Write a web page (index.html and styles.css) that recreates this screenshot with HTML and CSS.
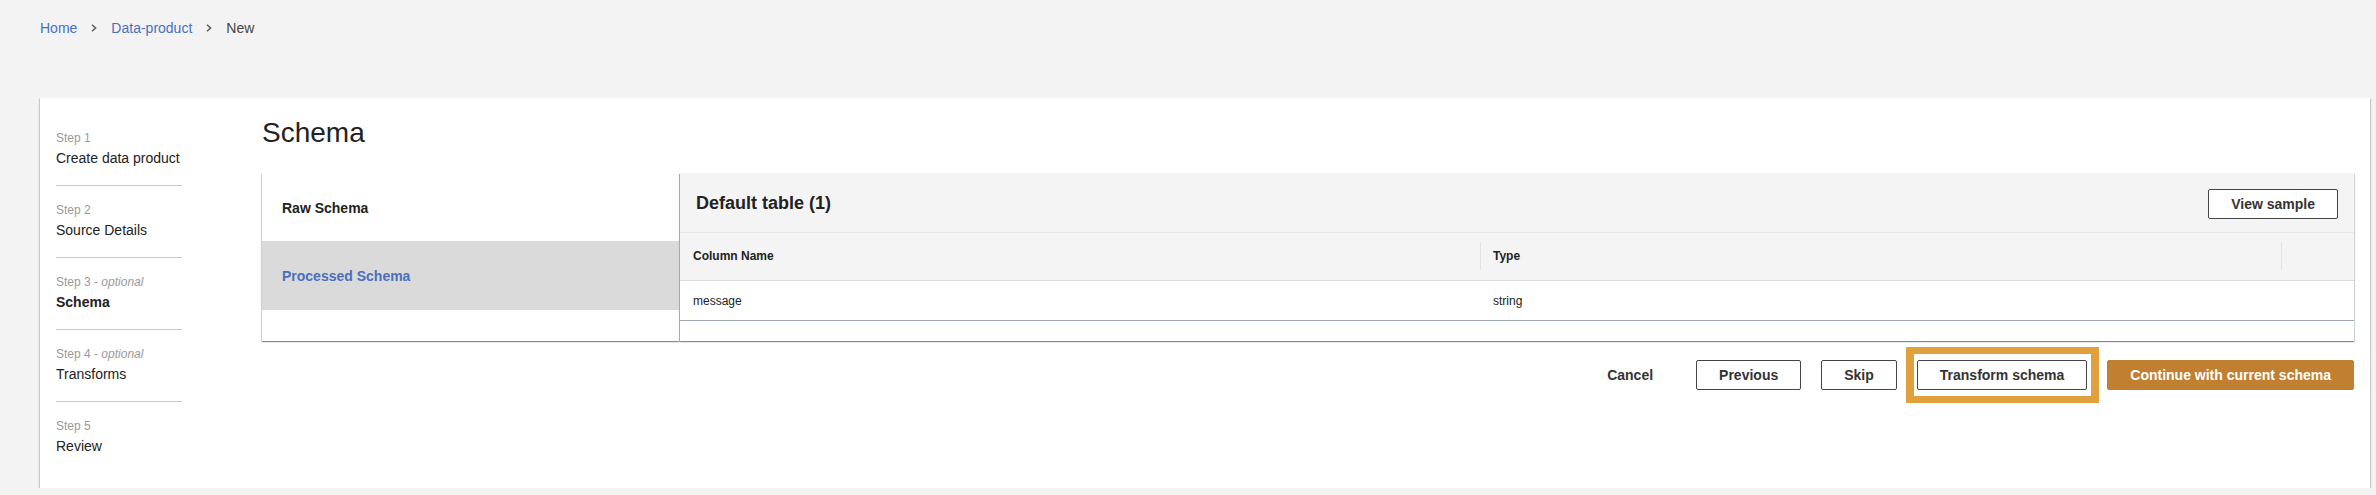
FILE: index.html
```html
<!DOCTYPE html>
<html lang="en">
<head>
  <meta charset="UTF-8" />
  <title>New data product - Schema</title>
  <link rel="stylesheet" href="styles.css">
</head>
<body>
<nav class="breadcrumbs">
  <a href="#">Home</a>
  <svg class="crumb-sep" width="6" height="8" viewBox="0 0 6 8"><path d="M1 0.8 L4.6 4 L1 7.2" /></svg>
  <a href="#">Data-product</a>
  <svg class="crumb-sep" width="6" height="8" viewBox="0 0 6 8"><path d="M1 0.8 L4.6 4 L1 7.2" /></svg>
  <span class="crumb-current">New</span>
</nav>

<div class="page">
  <div class="wizard">
    <ol class="steps">
      <li class="step">
        <span class="step-label">Step 1</span>
        <span class="step-title">Create data product</span>
      </li>
      <li class="step">
        <span class="step-label">Step 2</span>
        <span class="step-title">Source Details</span>
      </li>
      <li class="step active">
        <span class="step-label">Step 3 - <em>optional</em></span>
        <span class="step-title">Schema</span>
      </li>
      <li class="step">
        <span class="step-label">Step 4 - <em>optional</em></span>
        <span class="step-title">Transforms</span>
      </li>
      <li class="step">
        <span class="step-label">Step 5</span>
        <span class="step-title">Review</span>
      </li>
    </ol>

    <div class="content">
      <h1>Schema</h1>

      <div class="schema-panels">
        <ul class="schema-tabs">
          <li class="schema-tab">Raw Schema</li>
          <li class="schema-tab selected">Processed Schema</li>
        </ul>

        <div class="table-panel">
          <div class="table-header">
            <h2>Default table (1)</h2>
            <button class="btn">View sample</button>
          </div>
          <table class="schema-table">
            <colgroup>
              <col class="col-name">
              <col class="col-type">
              <col>
            </colgroup>
            <thead>
              <tr>
                <th>Column Name</th>
                <th class="sep">Type</th>
                <th class="sep"></th>
              </tr>
            </thead>
            <tbody>
              <tr>
                <td>message</td>
                <td>string</td>
                <td></td>
              </tr>
            </tbody>
          </table>
        </div>
      </div>

      <div class="actions">
        <button class="btn btn-link">Cancel</button>
        <button class="btn">Previous</button>
        <button class="btn">Skip</button>
        <button class="btn highlighted">Transform schema</button>
        <button class="btn btn-primary">Continue with current schema</button>
      </div>
    </div>
  </div>
</div>
</body>
</html>
```

FILE: styles.css
```css
/* Reset and base */
* {
  box-sizing: border-box;
}
body {
  margin: 0;
  font-family: 'Liberation Sans', Arial, sans-serif;
  background: #f3f3f3;
  color: #222;
}
button {
  font-family: inherit;
}

/* Breadcrumbs */
.breadcrumbs {
  display: flex;
  align-items: flex-start;
  gap: 14px;
  padding: 18px 0 0 40px;
  height: 98px;
  font-size: 14px;
  line-height: 20px;
}
.breadcrumbs a {
  color: #4a70bd;
  text-decoration: none;
}
.crumb-sep {
  margin-top: 6px;
  fill: none;
  stroke: #545b64;
  stroke-width: 1.5;
}
.crumb-current {
  color: #444;
}

/* Wizard card */
.page {
  padding: 0 6px 0 40px;
}
.wizard {
  display: flex;
  gap: 80px;
  min-height: 388px;
  padding: 18px 16px 15px 16px;
  background: #fff;
  box-shadow: 0 1px 1px 0 rgba(0,28,36,0.3), 1px 1px 1px 0 rgba(0,28,36,0.15), -1px 1px 1px 0 rgba(0,28,36,0.15);
}

/* Steps */
.steps {
  list-style: none;
  margin: 0;
  padding: 0;
  width: 126px;
  flex-shrink: 0;
}
.step {
  display: flex;
  flex-direction: column;
  gap: 2px;
  padding: 16px 0 17px 0;
  border-bottom: 1px solid #c6c6c6;
}
.step:first-child {
  padding-top: 14px;
}
.step:last-child {
  border-bottom: none;
}
.step-label {
  font-size: 12px;
  line-height: 16px;
  color: #9a9a9a;
  white-space: nowrap;
}
.step-title {
  font-size: 14px;
  line-height: 20px;
  color: #222;
  white-space: nowrap;
}
.step.active .step-title {
  font-weight: 700;
}

/* Content */
.content {
  flex: 1;
  display: flex;
  flex-direction: column;
}
h1 {
  margin: 0;
  font-size: 28px;
  line-height: 34px;
  font-weight: 400;
  color: #222;
}
.schema-panels {
  display: flex;
  gap: 1px;
  margin-top: 23px;
  height: 168px;
}
.schema-tabs {
  list-style: none;
  margin: 0;
  padding: 0;
  width: 417px;
  flex-shrink: 0;
  background: #fff;
  box-shadow: 0 1px 1px 0 rgba(0,28,36,0.3), 1px 1px 1px 0 rgba(0,28,36,0.15), -1px 1px 1px 0 rgba(0,28,36,0.15);
}
.schema-tab {
  display: flex;
  align-items: center;
  height: 68px;
  padding: 1px 0 0 20px;
  font-size: 14px;
  font-weight: 700;
  color: #222;
}
.schema-tab.selected {
  height: 69px;
  background: #dadada;
  color: #4a70bd;
}

/* Table panel */
.table-panel {
  flex: 1;
  background: #fff;
  box-shadow: 0 1px 1px 0 rgba(0,28,36,0.3), 1px 1px 1px 0 rgba(0,28,36,0.15), -1px 1px 1px 0 rgba(0,28,36,0.15);
}
.table-header {
  display: flex;
  align-items: center;
  justify-content: space-between;
  height: 60px;
  padding: 2px 16px 0 16px;
  background: #f4f4f4;
  border-bottom: 1px solid #e8e8e8;
}
.table-header h2 {
  margin: 0;
  font-size: 18px;
  font-weight: 700;
  color: #222;
}
.schema-table {
  width: 100%;
  border-collapse: collapse;
  table-layout: fixed;
}
.col-name {
  width: 800px;
}
.col-type {
  width: 801px;
}
.schema-table th {
  height: 47px;
  padding: 0 0 0 13px;
  text-align: left;
  font-size: 12px;
  font-weight: 700;
  color: #222;
  background: #f4f4f4;
  border-bottom: 1px solid #dcdcdc;
}
.schema-table th.sep {
  background: #f4f4f4 linear-gradient(#e3e3e3, #e3e3e3) left center / 1px 28px no-repeat;
}
.schema-table td {
  height: 40px;
  padding: 1px 0 0 13px;
  font-size: 12px;
  color: #222;
  border-bottom: 1px solid #a4abb2;
}

/* Buttons */
.actions {
  display: flex;
  justify-content: flex-end;
  gap: 20px;
  margin-top: 19px;
}
.btn {
  height: 30px;
  padding: 0 22px;
  background: #fff;
  border: 1px solid #444;
  border-radius: 2px;
  font-size: 14px;
  font-weight: 700;
  color: #333;
  cursor: pointer;
}
.btn-link {
  border-color: transparent;
  background: transparent;
}
.btn-primary {
  background: #c17f31;
  border-color: #c17f31;
  color: #fff;
}
.highlighted {
  position: relative;
}
.highlighted::after {
  content: "";
  position: absolute;
  top: -14px;
  bottom: -14px;
  left: -12px;
  right: -13px;
  border-style: solid;
  border-color: #e1a03e;
  border-width: 7px 8px;
}
```
